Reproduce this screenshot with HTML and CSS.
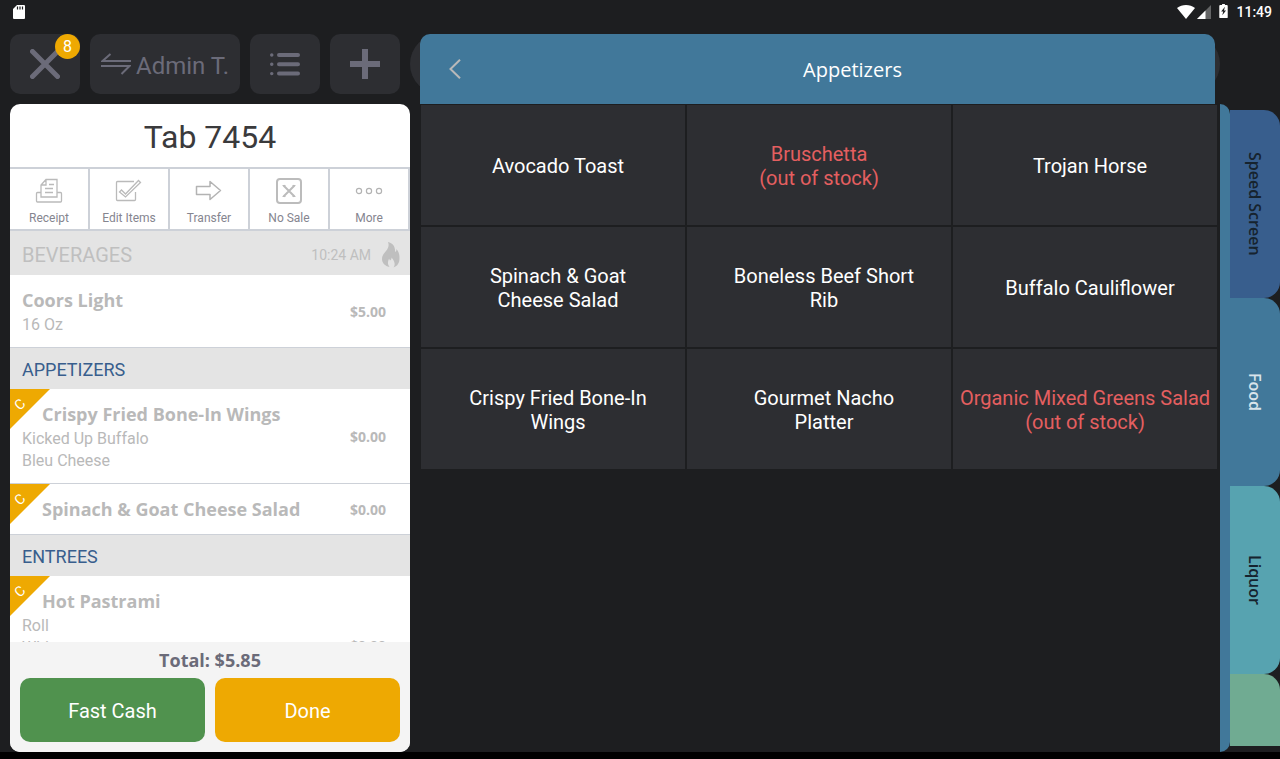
FILE: index.html
```html
<!DOCTYPE html>
<html lang="en">

<head>
    <meta charset="UTF-8">
    <meta name="viewport" content="width=device-width, initial-scale=1.0">
    <title>Tab 7454</title>
    <link rel="stylesheet" href="styles.css">
</head>

<body>
    <div class="app">
        <header class="status-bar">
            <svg class="sd-card" width="12" height="14" viewBox="0 0 12 14">
                <path d="M4 0h7a1 1 0 0 1 1 1v12a1 1 0 0 1-1 1H1a1 1 0 0 1-1-1V4z" fill="#fff"/>
                <path d="M4.5 1.5v3M7 1.5v3M9.5 1.5v3" stroke="#1d1e20" stroke-width="1.2"/>
            </svg>
            <div class="status-icons">
                <svg width="18" height="14" viewBox="0 0 18 14">
                    <path d="M0 3C5-1 13-1 18 3L9 14z" fill="#fff"/>
                </svg>
                <svg class="signal" width="14" height="14" viewBox="0 0 14 14">
                    <path d="M14 0v14H0z" fill="#636465"/>
                    <path d="M8.500 5.500V14H0z" fill="#fff"/>
                </svg>
                <svg class="battery" width="9" height="16" viewBox="0 0 9 16">
                    <path d="M3 0h3v1h2a1 1 0 0 1 1 1v12a1 1 0 0 1-1 1H1a1 1 0 0 1-1-1V2a1 1 0 0 1 1-1h2z" fill="#fff"/>
                    <path d="M6 3L2 8h2.200L3.200 12 7.200 6.800H5z" fill="#1d1e20"/>
                </svg>
                <span class="clock">11:49</span>
            </div>
        </header>

        <main class="main">
            <section class="order">
                <div class="toolbar">
                    <button class="tool close" type="button" aria-label="Close">
                        <svg width="30" height="30" viewBox="0 0 30 30">
                            <path d="M2.500 2.500l25 25M27.500 2.500l-25 25" stroke="#6b6b79" stroke-width="5" stroke-linecap="round"/>
                        </svg>
                        <span class="badge">8</span>
                    </button>
                    <button class="tool user" type="button">
                        <svg width="30" height="22" viewBox="0 0 30 22" fill="none" stroke="#6b6b79" stroke-width="2">
                            <path d="M9.500 1L1.500 8H30M0 13h28.500L20.500 21"/>
                        </svg>
                        <span>Admin T.</span>
                    </button>
                    <button class="tool" type="button" aria-label="List">
                        <svg width="30" height="24" viewBox="0 0 30 24" stroke="#6b6b79" stroke-linecap="round">
                            <path d="M9 3h19M9 12.300h19M9 21.600h19" stroke-width="4"/>
                            <path d="M1.700 3h.1M1.700 12.300h.1M1.700 21.600h.1" stroke-width="3.400"/>
                        </svg>
                    </button>
                    <button class="tool" type="button" aria-label="Add">
                        <svg width="30" height="30" viewBox="0 0 30 30">
                            <path d="M15 0v30M0 15h30" stroke="#6b6b79" stroke-width="6"/>
                        </svg>
                    </button>
                </div>

                <div class="ticket">
                    <h1>Tab 7454</h1>
                    <div class="actions">
                        <button type="button">
                            <svg width="28" height="28" viewBox="0 0 28 28" fill="none" stroke="#bababa" stroke-width="1.300">
                                <path d="M6 15.500H2.500a1 1 0 0 0-1 1v7.500a1 1 0 0 0 1 1h23a1 1 0 0 0 1-1v-7.500a1 1 0 0 0-1-1H22M6 20V8L11 2.500h11V20zM11 2.500V8H6M14 7.500h5M10 11.500h8M10 15.500h8"/>
                            </svg>
                            <span>Receipt</span>
                        </button>
                        <button type="button">
                            <svg width="28" height="28" viewBox="0 0 28 28" fill="none" stroke="#bababa" stroke-width="1.300">
                                <path d="M19 4.500H2.500a1 1 0 0 0-1 1V22.500a1 1 0 0 0 1 1h17a1 1 0 0 0 1-1V15M4.500 15l2-2 4 4L23.500 3.500l2 2-15 14.500z"/>
                            </svg>
                            <span>Edit Items</span>
                        </button>
                        <button type="button">
                            <svg width="28" height="28" viewBox="0 0 28 28" fill="none" stroke="#b3b3b3" stroke-width="1.500">
                                <path d="M1.500 9.500H15V4.500l10.500 9L15 22.500v-5H1.500z" stroke-linejoin="round"/>
                            </svg>
                            <span>Transfer</span>
                        </button>
                        <button type="button">
                            <svg width="28" height="28" viewBox="0 0 28 28" fill="none" stroke="#bcbcbc" stroke-width="2">
                                <rect x="2" y="2" width="24" height="24" rx="3"/>
                                <path d="M8.500 8.500L19.500 19.500M19.500 8.500L8.500 19.500"/>
                                <path d="M7.500 8.500h3M17.500 8.500h3M7.500 19.500h3M17.500 19.500h3" stroke-width="1"/>
                            </svg>
                            <span>No Sale</span>
                        </button>
                        <button type="button">
                            <svg width="28" height="28" viewBox="0 0 28 28" fill="none" stroke="#b3b3b3" stroke-width="1.200">
                                <circle cx="4" cy="14" r="2.600"/>
                                <circle cx="14" cy="14" r="2.600"/>
                                <circle cx="24" cy="14" r="2.600"/>
                            </svg>
                            <span>More</span>
                        </button>
                    </div>

                    <div class="items">
                        <div class="course sent">
                            <h2>BEVERAGES</h2>
                            <span class="time">10:24 AM</span>
                            <svg width="18" height="26" viewBox="0 0 18 26">
                                <path d="M6 0c5 1 7.500 5 7 10 1-.5 1.500-1.500 1.500-3C17 10 17.500 13 17.500 16c0 5-2 8-6 9.500 2-2.500 1.500-6-2-10 .2 1.500-.5 2.500-1.500 3-.3-.8-.6-1.300-1-1.800-1.300 3-1.700 5.300.5 8.300C3 24 0 21 0 17c0-7 9-9 6-17z" fill="#bfbfbf"/>
                            </svg>
                        </div>
                        <div class="item">
                            <div>
                                <h3>Coors Light</h3>
                                <p>16 Oz</p>
                            </div>
                            <span class="price">$5.00</span>
                        </div>

                        <div class="course"><h2>APPETIZERS</h2></div>
                        <div class="item comp">
                            <span class="flag"><span>C</span></span>
                            <div>
                                <h3>Crispy Fried Bone-In Wings</h3>
                                <p>Kicked Up Buffalo</p>
                                <p>Bleu Cheese</p>
                            </div>
                            <span class="price">$0.00</span>
                        </div>
                        <div class="item comp">
                            <span class="flag"><span>C</span></span>
                            <div>
                                <h3>Spinach &amp; Goat Cheese Salad</h3>
                            </div>
                            <span class="price">$0.00</span>
                        </div>

                        <div class="course"><h2>ENTREES</h2></div>
                        <div class="item comp tall">
                            <span class="flag"><span>C</span></span>
                            <div class="details">
                                <h3>Hot Pastrami</h3>
                                <p>Roll</p>
                                <p>White</p>
                            </div>
                            <span class="price">$0.00</span>
                        </div>
                    </div>

                    <div class="ticket-footer">
                        <div class="total">Total: $5.85</div>
                        <div class="pay-buttons">
                            <button class="cash" type="button">Fast Cash</button>
                            <button class="done" type="button">Done</button>
                        </div>
                    </div>
                </div>
            </section>

            <section class="menu">
                <div class="menu-header">
                    <button class="back" type="button" aria-label="Back">
                        <svg width="12" height="20" viewBox="0 0 12 20">
                            <path d="M11 .8L1.500 10l9.500 9.200" fill="none" stroke="#b9b9b9" stroke-width="2"/>
                        </svg>
                    </button>
                    <h2>Appetizers</h2>
                </div>
                <div class="menu-grid">
                    <button type="button">Avocado Toast</button>
                    <button class="out" type="button">Bruschetta<br>(out of stock)</button>
                    <button type="button">Trojan Horse</button>
                    <button type="button">Spinach &amp; Goat Cheese Salad</button>
                    <button type="button">Boneless Beef Short Rib</button>
                    <button type="button">Buffalo Cauliflower</button>
                    <button type="button">Crispy Fried Bone-In Wings</button>
                    <button type="button">Gourmet Nacho Platter</button>
                    <button class="out" type="button">Organic Mixed Greens Salad<br>(out of stock)</button>
                </div>
            </section>

            <nav class="side">
                <div class="tabs">
                    <button class="speed" type="button">Speed Screen</button>
                    <button class="food" type="button">Food</button>
                    <button class="liquor" type="button">Liquor</button>
                    <button class="next" type="button" aria-label="Next category"></button>
                </div>
            </nav>
        </main>
    </div>
</body>

</html>
```
FILE: styles.css
```css
* {
    box-sizing: border-box;
}

body {
    margin: 0;
    background: #000;
    font-family: Roboto, sans-serif;
}

h1,
h2,
h3,
p {
    margin: 0;
    font-weight: normal;
}

button {
    border: none;
    padding: 0;
    font-family: inherit;
    cursor: pointer;
}

svg {
    flex-shrink: 0;
}

.app {
    display: flex;
    flex-direction: column;
    height: calc(100vh - 7px);
    background: #1d1e20;
}

/* status bar */

.status-bar {
    display: flex;
    justify-content: space-between;
    align-items: center;
    height: 24px;
    padding: 0 8px 0 13px;
}

.status-icons {
    display: flex;
    align-items: center;
}

.signal {
    margin-left: 2px;
}

.battery {
    margin: 0 8px;
    padding-bottom: 1px;
}

.clock {
    color: #fff;
    font-size: 14px;
    font-weight: 500;
}

.main {
    display: flex;
    flex: 1;
    gap: 10px;
    min-height: 0;
    padding: 10px 0 0 10px;
}

/* order column */

.order {
    display: flex;
    flex-direction: column;
    flex: 0 0 400px;
    gap: 10px;
}

.toolbar {
    display: flex;
    gap: 10px;
    padding-right: 10px;
}

.tool {
    position: relative;
    display: flex;
    align-items: center;
    justify-content: center;
    width: 70px;
    height: 60px;
    border-radius: 10px;
    background: #2d2e32;
    color: #6b6b79;
}

.tool.user {
    flex: 1;
    gap: 5px;
    font-size: 24px;
}

.tool.user span {
    padding-top: 4px;
}

.badge {
    position: absolute;
    top: 0;
    right: 0;
    width: 25px;
    border-radius: 50%;
    background: #eea902;
    color: #fff;
    font-size: 16px;
    line-height: 25px;
}

.ticket {
    display: flex;
    flex-direction: column;
    flex: 1;
    min-height: 0;
    border-radius: 10px;
    background: #fff;
    overflow: hidden;
}

.ticket h1 {
    padding-top: 3px;
    color: #3a3a3c;
    font-size: 32px;
    line-height: 60px;
    text-align: center;
}

.actions {
    display: flex;
    border-top: 2px solid #cdd1d8;
    border-bottom: 2px solid #cdd1d8;
}

.actions button {
    display: flex;
    flex: 1;
    flex-direction: column;
    align-items: center;
    gap: 5px;
    height: 60px;
    padding-top: 8px;
    border-right: 2px solid #cdd1d8;
    background: #fff;
    color: #85858f;
    font-size: 12px;
    line-height: 16px;
}

.items {
    flex: 1;
    min-height: 0;
    overflow: hidden;
}

.course {
    display: flex;
    align-items: center;
    height: 41px;
    padding: 2px 10px 0 12px;
    background: #e4e4e4;
    color: #385e8d;
}

.course h2 {
    flex: 1;
    font-size: 18px;
}

.course.sent {
    height: 44px;
    padding-top: 3px;
    color: #bfbfbf;
}

.course.sent h2 {
    font-size: 20px;
}

.time {
    margin-right: 11px;
    font-size: 14px;
}

.item {
    position: relative;
    display: flex;
    align-items: center;
    justify-content: space-between;
    padding: 12px 24px 12px 12px;
    border-bottom: 1px solid #cdd1d8;
    color: #b9b9b9;
}

.item h3 {
    font-family: "Open Sans", sans-serif;
    font-size: 18px;
    font-weight: bold;
    line-height: 26px;
}

.item.comp h3 {
    padding-left: 20px;
}

.item p {
    padding-top: 2px;
    font-size: 16px;
    line-height: 20px;
}

.item.tall {
    min-height: 139px;
}

.details {
    align-self: flex-start;
}

.price {
    font-family: "Open Sans", sans-serif;
    font-size: 14px;
    font-weight: bold;
}

.flag {
    position: absolute;
    top: 0;
    left: 0;
    width: 40px;
    height: 40px;
    padding: 7px 5px;
    background: #eea902;
    clip-path: polygon(0 0, 100% 0, 0 100%);
    color: #fff;
    font-size: 14px;
    line-height: 16px;
}

.flag span {
    display: block;
    width: 10px;
    transform: rotate(-45deg);
}

.ticket-footer {
    padding: 0 10px 10px;
    background: #f4f4f4;
}

.total {
    color: #6b6b79;
    font-family: "Open Sans", sans-serif;
    font-size: 18px;
    font-weight: bold;
    line-height: 36px;
    text-align: center;
}

.pay-buttons {
    display: flex;
    gap: 10px;
}

.pay-buttons button {
    flex: 1;
    height: 64px;
    padding-top: 2px;
    border-radius: 10px;
    color: #fff;
    font-size: 20px;
}

.pay-buttons .cash {
    background: #50924e;
}

.pay-buttons .done {
    background: #eea902;
}

/* menu */

.menu {
    position: relative;
    z-index: 0;
    flex: 1;
}

/* rounded bar that shows behind the header */
.menu::before {
    content: "";
    position: absolute;
    z-index: -1;
    top: 0;
    left: -10px;
    right: 0;
    height: 60px;
    border-radius: 30px;
    background: #2d2e32;
}

.menu-header {
    display: flex;
    align-items: center;
    height: 70px;
    margin-right: 5px;
    border-radius: 10px 10px 0 0;
    background: #41789a;
}

.back {
    display: flex;
    align-items: center;
    justify-content: center;
    width: 70px;
    height: 70px;
    background: none;
}

.menu-header h2 {
    flex: 1;
    color: #fff;
    font-family: "Open Sans", sans-serif;
    font-size: 20px;
    text-align: center;
}

.menu-grid {
    display: grid;
    grid-template-columns: repeat(3, 1fr);
    grid-auto-rows: 120px;
    gap: 2px;
    margin-right: 2px;
    padding: 1px;
}

.menu-grid button {
    padding: 2px 30px 0 40px;
    background: #2d2e32;
    color: #fff;
    font-size: 20px;
    line-height: 24px;
}

.menu-grid .out {
    padding: 2px 5px 0;
    color: #e45f60;
}

/* category tabs */

.side {
    display: flex;
    width: 60px;
    margin-left: -10px;
    padding-top: 70px;
}

.side::before {
    content: "";
    width: 10px;
    border-radius: 0 10px 10px 0;
    background: #41789a;
}

.tabs {
    display: flex;
    flex: 1;
    flex-direction: column;
    margin: 6px 0;
    overflow: hidden;
}

.tabs button {
    flex: 0 0 188px;
    border-radius: 0 16px 16px 0;
    color: #16232e;
    font-family: "Open Sans", sans-serif;
    font-size: 16px;
    font-weight: 600;
    writing-mode: vertical-rl;
}

.tabs .speed {
    background: #385e8d;
}

.tabs .food {
    background: #41789a;
    color: #d9e4eb;
}

.tabs .liquor {
    background: #57a3b0;
}

.tabs .next {
    background: #70ab92;
}
```
